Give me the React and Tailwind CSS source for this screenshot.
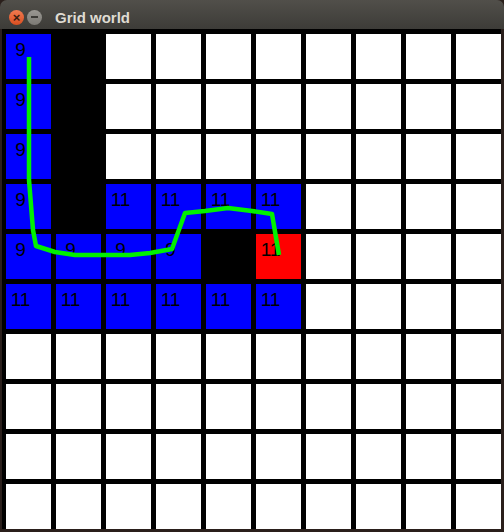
const BLUE = "bg-[#0000ff]";

// one row per string: b = blue, k = black, w = white, r = red
const rows = [
  "bkwwwwwwww",
  "bkwwwwwwww",
  "bkwwwwwwww",
  "bkbbbbwwww",
  "bbbbkrwwww",
  "bbbbbbwwww",
  "wwwwwwwwww",
  "wwwwwwwwww",
  "wwwwwwwwww",
  "wwwwwwwwww",
];

const labels = {
  "0-0": "9",
  "1-0": "9",
  "2-0": "9",
  "3-0": "9",
  "4-0": "9",
  "4-1": "9",
  "4-2": "9",
  "4-3": "9",
  "3-2": "11",
  "3-3": "11",
  "3-4": "11",
  "3-5": "11",
  "4-5": "11",
  "5-0": "11",
  "5-1": "11",
  "5-2": "11",
  "5-3": "11",
  "5-4": "11",
  "5-5": "11",
};

const cellColor = {
  b: BLUE,
  k: "bg-black",
  w: "bg-white",
  r: "bg-[#ff0000]",
};

function Cell({ kind, label }) {
  return (
    <div className={`h-[45px] w-[45px] ${cellColor[kind]}`}>
      {label ? (
        <div className="w-[29px] pt-[6px] text-center text-[19px] leading-[19px] text-black">
          {label}
        </div>
      ) : null}
    </div>
  );
}

export default function App() {
  return (
    <div
      className="flex h-[532px] w-[504px] flex-col bg-[#2a1f1b]"
      style={{ fontFamily: '"Liberation Sans", Arial, sans-serif' }}
    >
      <div className="flex h-[29px] items-center rounded-t-[7px] bg-gradient-to-b from-[#514f4a] to-[#3d3c38] pl-[9px] pt-[5px]">
        <div className="flex h-[15px] w-[15px] items-center justify-center rounded-full bg-gradient-to-b from-[#f27a4f] to-[#d94e1f] text-[13px] font-bold leading-none text-[#3a1d10]">
          ×
        </div>
        <div className="ml-[3px] flex h-[15px] w-[15px] items-center justify-center rounded-full bg-gradient-to-b from-[#9a9893] to-[#7c7a75]">
          <div className="h-[1.5px] w-[7px] bg-[#3c3b37]" />
        </div>
        <span className="ml-[13px] text-[15px] font-bold leading-none text-[#dfdbd2]">
          Grid world
        </span>
      </div>
      <div className="ml-[2px] mr-[3px] flex-1 bg-black pl-[4px] pt-[5px]">
        <div className="relative grid w-[495px] grid-cols-[repeat(10,45px)] gap-[5px]">
          {rows.map((row, r) =>
            row.split("").map((kind, c) => (
              <Cell key={`${r}-${c}`} kind={kind} label={labels[`${r}-${c}`]} />
            ))
          )}
          <svg
            className="pointer-events-none absolute left-0 top-0"
            width="495"
            height="495"
            viewBox="6 34 495 495"
          >
            <polyline
              points="29,57 29,180 31,205 33,230 36,246 55,252 75,255 130,255 150,253 172,249 185,213 205,211 228,208 252,211 272,214 279,255"
              fill="none"
              stroke="#00f000"
              strokeWidth="4.5"
              strokeLinejoin="round"
            />
          </svg>
        </div>
      </div>
      <div className="h-[3px]" />
    </div>
  );
}
